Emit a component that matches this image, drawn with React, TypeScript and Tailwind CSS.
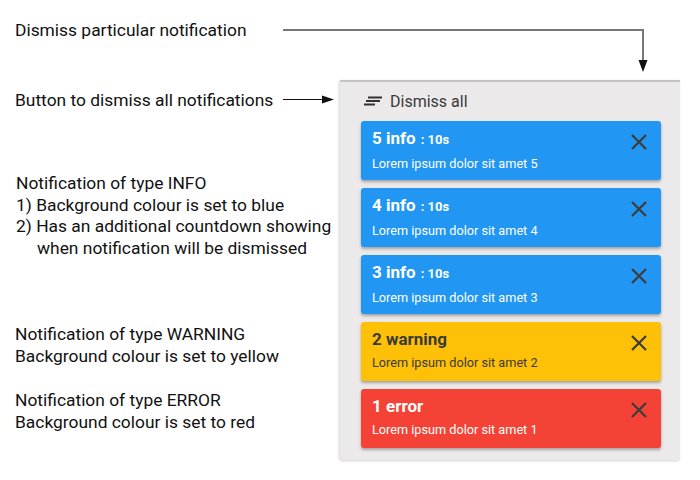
type Kind = 'info' | 'warning' | 'error';

interface Note {
  id: number;
  kind: Kind;
  text: string;
}

const notes: Note[] = [
  { id: 5, kind: 'info', text: 'Lorem ipsum dolor sit amet 5' },
  { id: 4, kind: 'info', text: 'Lorem ipsum dolor sit amet 4' },
  { id: 3, kind: 'info', text: 'Lorem ipsum dolor sit amet 3' },
  { id: 2, kind: 'warning', text: 'Lorem ipsum dolor sit amet 2' },
  { id: 1, kind: 'error', text: 'Lorem ipsum dolor sit amet 1' },
];

const cardStyles: Record<Kind, string> = {
  info: 'bg-[#2196f3] text-white',
  warning: 'bg-[#ffc107] text-[#3a3a3a]',
  error: 'bg-[#f44336] text-white',
};

function DismissIcon() {
  return (
    <svg width="20" height="12" viewBox="0 0 20 12" className="shrink-0">
      <path d="M5 1.5h14M3 5h14M1 8.5h11" stroke="#333" strokeWidth="2" fill="none" />
    </svg>
  );
}

function CloseIcon() {
  return (
    <svg width="16" height="16" viewBox="0 0 16 16">
      <path d="M1 1L15 15M15 1L1 15" stroke="#3c3c3c" strokeWidth="2.2" fill="none" />
    </svg>
  );
}

function NoteCard({ note }: { note: Note }) {
  return (
    <div className={`flex h-[59px] w-[300px] items-start rounded-[3px] pl-[11px] pr-[14px] pt-[6px] shadow-[0_2px_3px_rgba(0,0,0,0.3)] ${cardStyles[note.kind]}`}>
      <div className="flex-1">
        <div className="flex items-baseline gap-[5px] text-[17px] font-bold leading-[22px]">
          <span>{note.id} {note.kind}</span>
          {note.kind === 'info' && <span className="text-[13px]">: 10s</span>}
        </div>
        <div className="mt-[4px] text-[12.7px] leading-[17px]">{note.text}</div>
      </div>
      <button className="mt-[7px]">
        <CloseIcon />
      </button>
    </div>
  );
}

export default function App() {
  return (
    <div className="relative h-[480px] w-[700px] overflow-hidden bg-white font-['Roboto',sans-serif] text-[17.4px] leading-[21.5px] text-[#111]">
      {/* annotation arrows */}
      <svg className="pointer-events-none absolute left-0 top-0" width="700" height="480">
        <path d="M283 30H643V61" stroke="#777" strokeWidth="2" fill="none" />
        <path d="M638.5 60h9L643 72z" fill="#111" />
        <path d="M283 99.5H324" stroke="#111" strokeWidth="1.2" fill="none" />
        <path d="M322 95.5l12 4-12 4z" fill="#111" />
      </svg>

      <div className="flex">
        {/* labels */}
        <div className="w-[340px] shrink-0 pl-[15px]">
          <p className="mt-[20px]">Dismiss particular notification</p>
          <p className="mt-[48px]">Button to dismiss all notifications</p>
          <div className="mt-[62px] pl-[1px]">
            <p>Notification of type INFO</p>
            <p>1) Background colour is set to blue</p>
            <p>2) Has an additional countdown showing</p>
            <p className="pl-[21px]">when notification will be dismissed</p>
          </div>
          <div className="mt-[65px]">
            <p>Notification of type WARNING</p>
            <p>Background colour is set to yellow</p>
          </div>
          <div className="mt-[23px]">
            <p>Notification of type ERROR</p>
            <p>Background colour is set to red</p>
          </div>
        </div>

        {/* panel */}
        <div className="mt-[80px] h-[380px] w-[340px] rounded-bl-[4px] border-t-2 border-[#c4c2c3] bg-[#ebe9ea] pl-[21px] shadow-[-1px_1px_3px_rgba(0,0,0,0.18)]">
          <button className="mt-[7px] flex h-[26px] items-center gap-[7px] pl-[2px] text-[16px] text-[#3a3a3a]">
            <DismissIcon />
            <span>Dismiss all</span>
          </button>
          <div className="mt-[6px] flex flex-col gap-[8px]">
            {notes.map((n) => (
              <NoteCard key={n.id} note={n} />
            ))}
          </div>
        </div>
      </div>
    </div>
  );
}
